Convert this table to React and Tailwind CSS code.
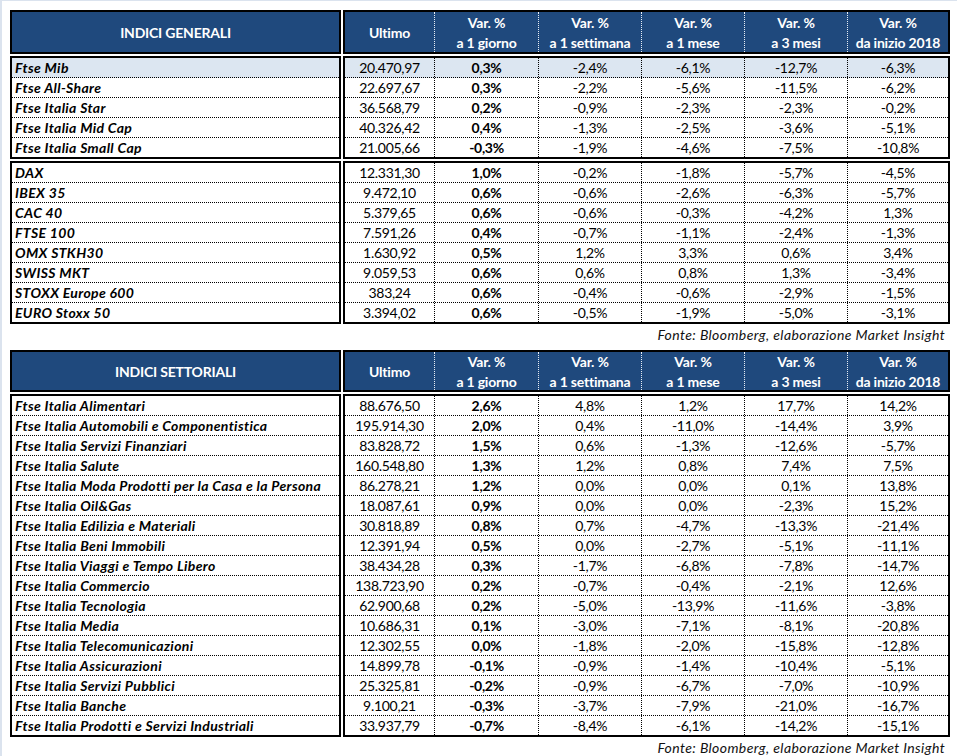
import React from "react";

const g1 = [
  ["Ftse Mib", "20.470,97", "0,3%", "-2,4%", "-6,1%", "-12,7%", "-6,3%"],
  ["Ftse All-Share", "22.697,67", "0,3%", "-2,2%", "-5,6%", "-11,5%", "-6,2%"],
  ["Ftse Italia Star", "36.568,79", "0,2%", "-0,9%", "-2,3%", "-2,3%", "-0,2%"],
  ["Ftse Italia Mid Cap", "40.326,42", "0,4%", "-1,3%", "-2,5%", "-3,6%", "-5,1%"],
  ["Ftse Italia Small Cap", "21.005,66", "-0,3%", "-1,9%", "-4,6%", "-7,5%", "-10,8%"],
];

const g2 = [
  ["DAX", "12.331,30", "1,0%", "-0,2%", "-1,8%", "-5,7%", "-4,5%"],
  ["IBEX 35", "9.472,10", "0,6%", "-0,6%", "-2,6%", "-6,3%", "-5,7%"],
  ["CAC 40", "5.379,65", "0,6%", "-0,6%", "-0,3%", "-4,2%", "1,3%"],
  ["FTSE 100", "7.591,26", "0,4%", "-0,7%", "-1,1%", "-2,4%", "-1,3%"],
  ["OMX STKH30", "1.630,92", "0,5%", "1,2%", "3,3%", "0,6%", "3,4%"],
  ["SWISS MKT", "9.059,53", "0,6%", "0,6%", "0,8%", "1,3%", "-3,4%"],
  ["STOXX Europe 600", "383,24", "0,6%", "-0,4%", "-0,6%", "-2,9%", "-1,5%"],
  ["EURO Stoxx 50", "3.394,02", "0,6%", "-0,5%", "-1,9%", "-5,0%", "-3,1%"],
];

const g3 = [
  ["Ftse Italia Alimentari", "88.676,50", "2,6%", "4,8%", "1,2%", "17,7%", "14,2%"],
  ["Ftse Italia Automobili e Componentistica", "195.914,30", "2,0%", "0,4%", "-11,0%", "-14,4%", "3,9%"],
  ["Ftse Italia Servizi Finanziari", "83.828,72", "1,5%", "0,6%", "-1,3%", "-12,6%", "-5,7%"],
  ["Ftse Italia Salute", "160.548,80", "1,3%", "1,2%", "0,8%", "7,4%", "7,5%"],
  ["Ftse Italia Moda Prodotti per la Casa e la Persona", "86.278,21", "1,2%", "0,0%", "0,0%", "0,1%", "13,8%"],
  ["Ftse Italia Oil&Gas", "18.087,61", "0,9%", "0,0%", "0,0%", "-2,3%", "15,2%"],
  ["Ftse Italia Edilizia e Materiali", "30.818,89", "0,8%", "0,7%", "-4,7%", "-13,3%", "-21,4%"],
  ["Ftse Italia Beni Immobili", "12.391,94", "0,5%", "0,0%", "-2,7%", "-5,1%", "-11,1%"],
  ["Ftse Italia Viaggi e Tempo Libero", "38.434,28", "0,3%", "-1,7%", "-6,8%", "-7,8%", "-14,7%"],
  ["Ftse Italia Commercio", "138.723,90", "0,2%", "-0,7%", "-0,4%", "-2,1%", "12,6%"],
  ["Ftse Italia Tecnologia", "62.900,68", "0,2%", "-5,0%", "-13,9%", "-11,6%", "-3,8%"],
  ["Ftse Italia Media", "10.686,31", "0,1%", "-3,0%", "-7,1%", "-8,1%", "-20,8%"],
  ["Ftse Italia Telecomunicazioni", "12.302,55", "0,0%", "-1,8%", "-2,0%", "-15,8%", "-12,8%"],
  ["Ftse Italia Assicurazioni", "14.899,78", "-0,1%", "-0,9%", "-1,4%", "-10,4%", "-5,1%"],
  ["Ftse Italia Servizi Pubblici", "25.325,81", "-0,2%", "-0,9%", "-6,7%", "-7,0%", "-10,9%"],
  ["Ftse Italia Banche", "9.100,21", "-0,3%", "-3,7%", "-7,9%", "-21,0%", "-16,7%"],
  ["Ftse Italia Prodotti e Servizi Industriali", "33.937,79", "-0,7%", "-8,4%", "-6,1%", "-14,2%", "-15,1%"],
];

const colW = ["w-[89px]", "w-[104px]", "w-[103px]", "w-[103px]", "w-[103px]", "w-[101px]"];

function Header({ title, tall }) {
  const h = tall ? "h-[40px]" : "h-[38px]";
  const outer = tall ? "h-[44px]" : "h-[42px]";
  const subs = ["a 1 giorno", "a 1 settimana", "a 1 mese", "a 3 mesi", "da inizio 2018"];
  return (
    <div className="flex gap-[2px] text-white font-bold text-[14px] tracking-[-0.2px]">
      <div className={`w-[331px] ${outer} border-2 border-black bg-[#1f497d] flex items-center justify-center pt-[2px]`}>
        {title}
      </div>
      <div className={`w-[607px] ${outer} border-2 border-black bg-[#1f497d] flex`}>
        <div className={`${colW[0]} ${h} flex items-center justify-center pt-[2px]`}>Ultimo</div>
        {subs.map((s, i) => (
          <div
            key={s}
            className={`${colW[i + 1]} ${h} border-l border-dotted border-[#e8eef6] flex flex-col items-center justify-center leading-[20px] pt-[2px]`}
          >
            <span>Var. %</span>
            <span>{s}</span>
          </div>
        ))}
      </div>
    </div>
  );
}

function Group({ rows, highlightFirst }) {
  return (
    <div className="flex gap-[2px] mt-[2px]">
      <div className="w-[331px] border-2 border-black">
        {rows.map((r, i) => (
          <div
            key={i}
            className={`h-[20px] last:h-[19px] border-b border-dotted border-black last:border-b-0 pl-[3px] pt-[1px] flex items-center whitespace-nowrap ${
              i === 0 && highlightFirst ? "bg-[#dce6f1]" : ""
            }`}
          >
            <span className="font-bold italic tracking-[0.35px]">{r[0]}</span>
          </div>
        ))}
      </div>
      <div className="w-[607px] border-2 border-black">
        {rows.map((r, i) => (
          <div
            key={i}
            className={`flex h-[20px] last:h-[19px] border-b border-dotted border-black last:border-b-0 ${
              i === 0 && highlightFirst ? "bg-[#dce6f1]" : ""
            }`}
          >
            {r.slice(1).map((v, j) => (
              <div
                key={j}
                className={`${colW[j]} h-full pt-[1px] flex items-center justify-center tracking-[-0.3px] ${
                  j > 0 ? "border-l border-dotted border-black" : ""
                } ${j === 1 ? "font-bold" : ""}`}
              >
                {v}
              </div>
            ))}
          </div>
        ))}
      </div>
    </div>
  );
}

function Source() {
  return (
    <div className="w-[940px] text-right pr-[5px] leading-[18px] text-[#111]">
      <span className="italic tracking-[0.4px]">Fonte: Bloomberg, elaborazione Market Insight</span>
    </div>
  );
}

export default function App() {
  return (
    <div className="w-[957px] h-[756px] bg-white border-l-2 border-t border-[#dbe3ee] pl-[8px] pt-[9px] font-['Lato',sans-serif] text-[14px] text-black leading-none overflow-hidden">
      <Header title="INDICI GENERALI" tall />
      <Group rows={g1} highlightFirst />
      <Group rows={g2} />
      <div className="h-[26px] pt-[2px]">
        <Source />
      </div>
      <Header title="INDICI SETTORIALI" />
      <Group rows={g3} />
      <div className="pt-[2px]">
        <Source />
      </div>
    </div>
  );
}
